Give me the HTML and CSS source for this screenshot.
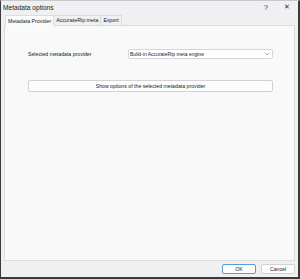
FILE: index.html
```html
<!DOCTYPE html>
<html>
    <head>
        <meta charset="utf-8" />
        <title>Metadata options</title>
        <link rel="stylesheet" href="styles.css">
    </head>
    <body>
        <div class="window">
            <div class="titlebar">
                <span class="title">Metadata options</span>
                <span class="title-btn help">?</span>
                <span class="title-btn close">&#x2715;</span>
            </div>
            <div class="client">
                <div class="tabs">
                    <div class="tab active">Metadata Provider</div>
                    <div class="tab">AccurateRip meta</div>
                    <div class="tab">Export</div>
                </div>
                <div class="panel">
                    <div class="row">
                        <span class="label">Selected metadata provider</span>
                        <div class="combo">
                            <span>Build-in AccurateRip meta engine</span>
                            <svg class="chevron" width="6" height="4" viewBox="0 0 6 4">
                                <path d="M0.8 0.8 L3 3 L5.2 0.8" fill="none" stroke="#888" stroke-width="0.7" />
                            </svg>
                        </div>
                    </div>
                    <div class="button wide">Show options of the selected metadata provider</div>
                </div>
                <div class="footer">
                    <div class="button default">OK</div>
                    <div class="button">Cancel</div>
                </div>
            </div>
        </div>
    </body>
</html>
```

FILE: styles.css
```css
html, body {
    margin: 0;
    padding: 0;
    background: #ffffff;
}
.window {
    width: 300px;
    height: 279px;
    box-sizing: border-box;
    border: 1px solid #3a3a3a;
    border-top-color: #c8c8c8;
    border-bottom-width: 2px;
    border-right-width: 2px;
    background: #f0f0f0;
    display: flex;
    flex-direction: column;
    font-family: "Liberation Sans", Arial, sans-serif;
    font-size: 5.2px;
    color: #1a1a1a;
}
.titlebar {
    height: 12px;
    display: flex;
    align-items: center;
    background: #eef0f3;
    padding-left: 2px;
}
.title {
    flex: 1;
    font-size: 6.6px;
}
.title-btn {
    width: 20px;
    text-align: center;
    font-size: 7px;
    color: #333;
}
.help {
    margin-right: 1px;
}
.close {
    font-size: 7px;
    margin-right: 1px;
}
.client {
    flex: 1;
    display: flex;
    flex-direction: column;
    padding: 2px 3px 0 3px;
}
.tabs {
    display: flex;
    height: 10px;
    align-items: flex-end;
    padding-left: 1px;
}
.tab {
    height: 9px;
    line-height: 9px;
    padding: 0 2px;
    border: 1px solid #dcdcdc;
    border-bottom: none;
    border-left: none;
    background: #f0f0f0;
    font-size: 5.3px;
}
.tab.active {
    height: 10px;
    line-height: 10px;
    background: #fafbfa;
    border-left: 1px solid #dcdcdc;
    margin-bottom: -1px;
    position: relative;
    z-index: 1;
}
.panel {
    flex: 1;
    background: #f8f9f8;
    border: 1px solid #dcdcdc;
    padding: 23px 21px 0 23px;
    display: flex;
    flex-direction: column;
    gap: 21px;
}
.row {
    display: flex;
    align-items: center;
}
.label {
    width: 100px;
    padding-left: 0;
}
.combo {
    flex: 1;
    height: 10px;
    box-sizing: border-box;
    border: 1px solid #d6d6d6;
    border-radius: 2px;
    background: #ffffff;
    display: flex;
    align-items: center;
    justify-content: space-between;
    padding: 0 2px 0 1px;
    font-size: 5px;
}
.button {
    height: 12px;
    box-sizing: border-box;
    border: 1px solid #d2d2d2;
    border-radius: 2px;
    background: #fdfdfd;
    display: flex;
    align-items: center;
    justify-content: center;
}
.footer {
    height: 16px;
    display: flex;
    justify-content: flex-end;
    align-items: center;
    gap: 5px;
}
.footer .button {
    width: 34px;
    height: 10px;
}
.button.default {
    border-color: #5b9bd5;
}
```
